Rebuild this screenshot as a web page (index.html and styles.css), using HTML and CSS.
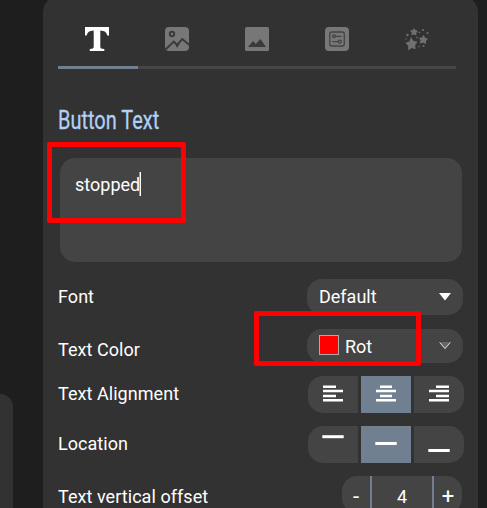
FILE: index.html
```html
<!DOCTYPE html>
<html lang="en">
<head>
<meta charset="utf-8">
<title>Button settings</title>
<link rel="stylesheet" href="styles.css">
</head>
<body>
<div class="app">
  <aside class="side-card"></aside>
  <main class="panel">
    <nav class="tabs">
      <button class="tab active" aria-label="Text"><svg viewBox="0 0 24 24"><path d="M0 0H24V8.5H22.4C21.4 5 19.5 3.6 15.3 3.4V19.5C15.3 21.5 16.4 21.8 19.3 22V24H4.8V22C7.6 21.8 8.7 21.5 8.7 19.5V3.4C4.5 3.6 2.6 5 1.6 8.5H0Z"/></svg></button>
      <button class="tab" aria-label="Image"><svg viewBox="0 0 24 24"><rect width="24" height="24" rx="4"/><circle class="cut" cx="7" cy="7" r="2.2"/><path class="cut" d="M.5 22.5L8.8 14.5L12 18L17.3 12L24 17.8M11.5 20L14 16"/></svg></button>
      <button class="tab" aria-label="Background"><svg viewBox="0 0 24 24"><rect width="24" height="24" rx="1.5"/><path class="hole" d="M3 20L8 14L10.8 17L15.4 12L21 20Z"/></svg></button>
      <button class="tab" aria-label="Controls"><svg viewBox="0 0 24 24"><rect width="24" height="24" rx="4"/><g class="cut thin"><rect x="4.8" y="5" width="14.5" height="14" rx="2"/><circle cx="9" cy="9.3" r="1.4"/><path d="M10.4 9.3H16.5M7.4 14.7H13.2"/><circle cx="14.8" cy="14.7" r="1.5"/></g></svg></button>
      <button class="tab" aria-label="Effects"><svg class="stars" viewBox="0 0 24 24"><path d="M9 1L10.4 3L13 4L11.2 6L11.4 8.5L9 7.4L6.4 8.3L6.7 5.6L5 3.4L7.8 3ZM18.5 8L20.2 10.7L23 11.8L21 14L21 17L18 15.8L14.7 16.6L15.4 13.4L14 10.8L17 10.5ZM6 10L8.2 13.8L12.5 14.7L10.2 18L10.6 22.3L6.8 21L3.2 23.3L3.2 19L.5 15.8L4.3 14.5Z"/><g><circle cx="18" cy="3" r="1.1"/><circle cx="22.5" cy="6" r="1"/><circle cx="14.5" cy="5.5" r=".8"/><circle cx="2.5" cy="8" r="1.2"/><circle cx="1" cy="12" r=".7"/><circle cx="14" cy="19.5" r=".8"/><circle cx="18.5" cy="19" r="1"/><circle cx="12" cy="10.5" r=".8"/></g></svg></button>
    </nav>
    <h1 class="title"><span>Button Text</span></h1>
    <div class="textarea">stopped<i class="caret"></i><i class="mark mark-text"></i></div>

    <div class="row font-row"><label>Font</label>
      <div class="select">Default<svg class="arrow" viewBox="0 0 12 8"><path d="M0 0H12L6 7.5Z"/></svg></div>
    </div>
    <div class="row color-row"><label>Text Color</label>
      <div class="select"><i class="swatch"></i>Rot<svg class="arrow open" viewBox="0 0 12 8"><path class="fill" d="M0 0H12L6 7.5Z"/><path d="M.7 .5L6 6.5L11.3 .5"/></svg></div>
      <i class="mark mark-color"></i>
    </div>
    <div class="row align-row"><label>Text Alignment</label>
      <div class="segments">
        <button aria-label="Left"><svg viewBox="0 0 20 17"><path d="M0 1.8H13M0 6H20M0 11H13M0 15.2H20"/></svg></button>
        <button class="on" aria-label="Center"><svg viewBox="0 0 20 17"><path d="M4 1.8H16M0 6H20M4 11H16M0 15.2H20"/></svg></button>
        <button aria-label="Right"><svg viewBox="0 0 20 17"><path d="M7 1.8H20M0 6H20M7 11H20M0 15.2H20"/></svg></button>
      </div>
    </div>
    <div class="row location-row"><label>Location</label>
      <div class="segments bars">
        <button aria-label="Top"><svg viewBox="0 0 20 17"><path d="M-.7 1.7H20.7"/></svg></button>
        <button class="on" aria-label="Middle"><svg viewBox="0 0 20 17"><path d="M-.7 8.5H20.7"/></svg></button>
        <button aria-label="Bottom"><svg viewBox="0 0 20 17"><path d="M-.7 15.5H20.7"/></svg></button>
      </div>
    </div>
    <div class="row offset-row"><label>Text vertical offset</label>
      <div class="stepper"><button>-</button><output>4</output><button>+</button></div>
    </div>
  </main>
</div>
</body>
</html>
```

FILE: styles.css
```css
* { box-sizing: border-box; }
html, body { margin: 0; height: 100%; overflow: hidden; }
body { background: #1e1e1e; color: #fff; font: 18px/24px Roboto, "Liberation Sans", sans-serif; }
button { border: 0; padding: 0; background: none; color: inherit; font: inherit; }
.app { display: flex; height: 508px; overflow: hidden; }
.side-card { width: 13px; margin: 394px 30px 0 0; flex: none; border-radius: 0 18px 0 0; background: #323232; }
.panel { width: 435px; height: 530px; margin-top: -4px; padding: 4px 14px 0 15px; flex: none; border-radius: 16px; background: #323232; }

.tabs { display: flex; width: 398px; height: 69px; border-bottom: 3px solid #464646; }
.tab { display: flex; flex: 0 0 80px; height: 69px; padding: 27px 0 0 27px; }
.tab:last-child { flex-basis: 78px; }
.tab.active { border-bottom: 3px solid #708090; }
.tab svg { width: 24px; height: 24px; fill: #777; overflow: visible; }
.tab.active svg { fill: #fff; }
.tab .stars { fill: #707070; }
.tab .cut { fill: none; stroke: #3a3a3a; stroke-width: 1.9; }
.tab .thin { stroke: #444; stroke-width: 1.3; }
.tab .hole { fill: #3a3a3a; }

.title { height: 36px; margin: 33px 0 0; color: #b0d0f5; font-size: 26px; line-height: 36px; font-weight: 400; }
.title span { display: inline-block; transform: scaleX(.768); transform-origin: 0 50%; -webkit-text-stroke: .3px #b0d0f5; }

.textarea { position: relative; display: flex; width: 402px; height: 104px; margin: 20px 0 0 2px; padding: 15px; border-radius: 15px; background: #444; }
.caret { width: 1px; height: 24px; margin-top: -1px; background: #fff; box-shadow: -1px 0 #999; }
.mark { position: absolute; border: 5px solid #f00; border-radius: 2px; }
.mark-text { left: -13px; top: -16px; width: 139px; height: 81px; }
.mark-color { left: 196px; top: -18px; width: 167px; height: 55px; }

.row { position: relative; display: flex; justify-content: space-between; width: 406px; }
.row label { padding-top: 6px; white-space: nowrap; letter-spacing: .05px; }
.font-row { height: 36px; margin-top: 17px; }
.color-row { height: 34px; margin-top: 14px; }
.color-row label { padding-top: 9px; }
.align-row { height: 37px; margin-top: 13px; }
.location-row { height: 37px; margin-top: 13px; }
.offset-row { height: 37px; margin-top: 13px; }
.offset-row label { padding-top: 9px; }

.select { display: flex; align-items: center; width: 156px; margin-right: 1px; padding: 0 12px; border-radius: 15px; background: #444; }
.color-row .select { padding-top: 2px; }
.swatch { width: 20px; height: 20px; margin: -4px 6px 0 0; border: 1px solid #aaa; background: #f00; }
.arrow { width: 12px; height: 8px; margin-left: auto; fill: #fff; }
.arrow.open { margin-top: -2px; }
.arrow.open path { fill: none; stroke: #ddd; stroke-width: 1; }
.arrow.open .fill { fill: #666; stroke: none; }

.segments { display: flex; gap: 3px; }
.segments button { display: flex; justify-content: center; width: 50px; height: 37px; padding-top: 9px; background: #444; }
.segments button:first-child { border-radius: 15px 0 0 15px; }
.segments button:last-child { border-radius: 0 15px 15px 0; }
.segments .on { background: #708090; }
.segments svg { width: 20px; height: 17px; overflow: visible; stroke: #fff; stroke-width: 2.4; }
.segments.bars svg { stroke-width: 3; }

.stepper { display: flex; width: 120px; height: 37px; margin-right: 2px; overflow: hidden; border-radius: 15px; background: #444; line-height: 42px; text-align: center; }
.stepper button { width: 28px; font-size: 22px; line-height: 42px; }
.stepper output { width: 64px; border: solid #708090; border-width: 0 2px; }
```
